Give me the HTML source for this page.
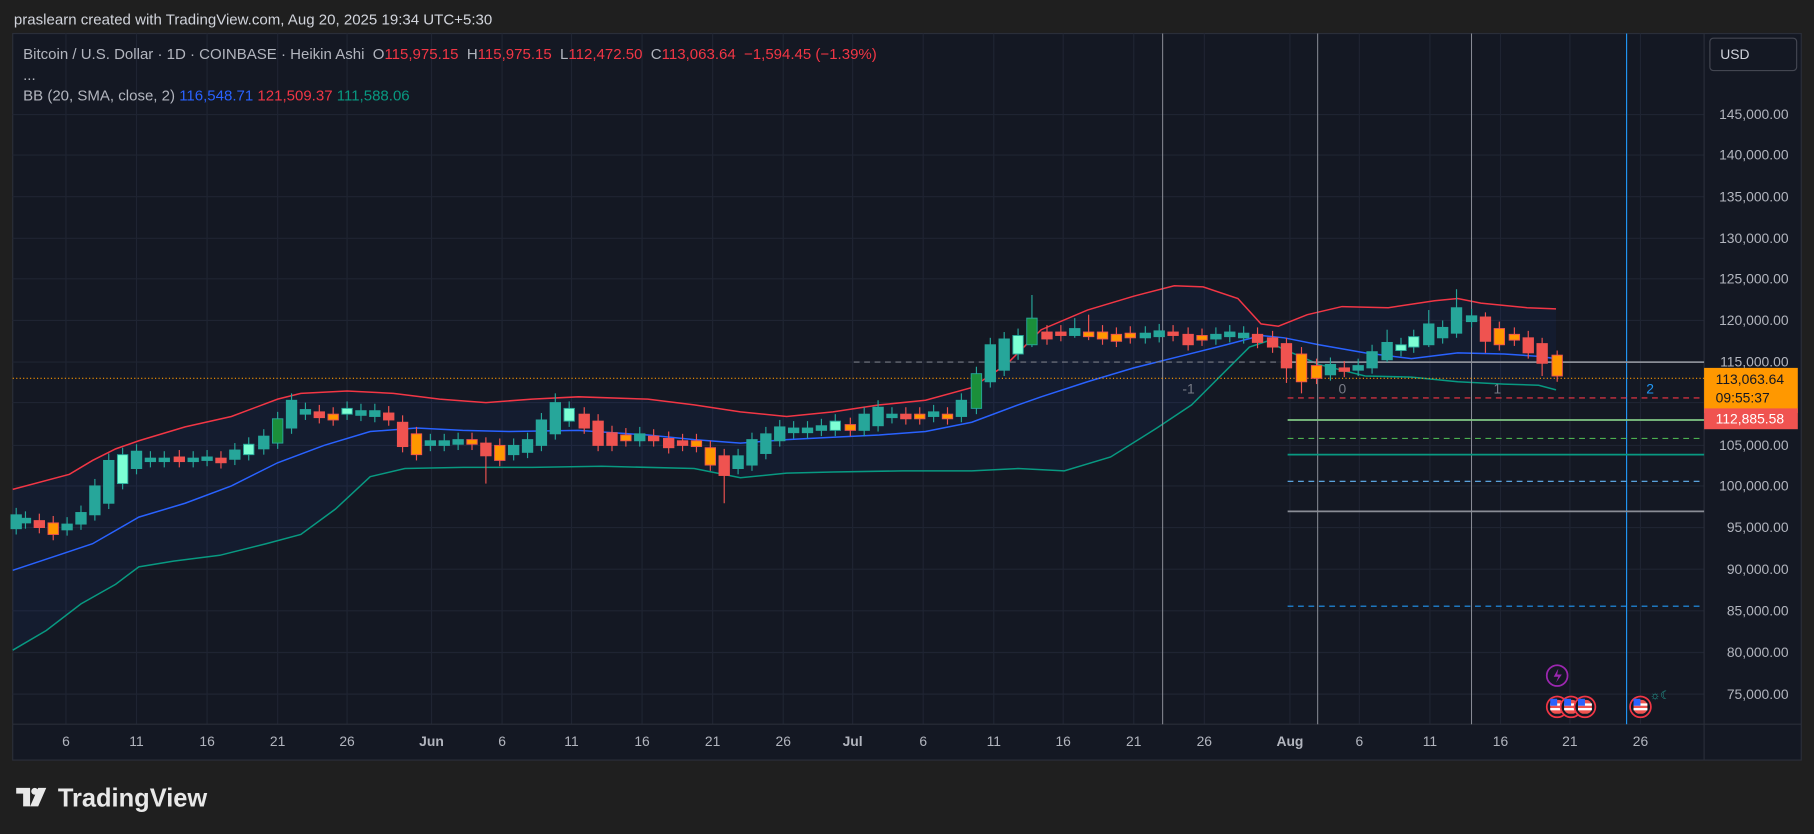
<!DOCTYPE html>
<html><head><meta charset="utf-8"><style>
html,body{margin:0;padding:0;background:#1f1f1f;width:1814px;height:834px;overflow:hidden}
#w{position:absolute;left:0;top:0;width:1568px;height:721px;transform:scale(1.15689);transform-origin:0 0;font-family:"Liberation Sans",sans-serif}
.t{position:absolute;white-space:nowrap}
</style></head><body><div id="w">
<div class="t" style="left:12px;top:9px;font-size:13px;color:#d1d4dc">praslearn created with TradingView.com, Aug 20, 2025 19:34 UTC+5:30</div>
<svg id="s" width="1568" height="721" style="position:absolute;left:0;top:0" font-family="Liberation Sans, sans-serif">
<rect x="11" y="29" width="1546" height="628" fill="#141823" stroke="#2a2e39"/>
<g id="grid" stroke="#1f2432" stroke-width="1"></g>
<line x1="1473" y1="29" x2="1473" y2="657" stroke="#2a2e39"/>
<line x1="11" y1="626" x2="1557" y2="626" stroke="#2a2e39"/>
<polygon id="band" fill="#2962ff" fill-opacity="0.06"/>
<polyline id="up" fill="none" stroke="#f23645" stroke-width="1.3"/>
<polyline id="mid" fill="none" stroke="#2962ff" stroke-width="1.3"/>
<polyline id="lo" fill="none" stroke="#089981" stroke-width="1.3"/>
<line x1="1005" y1="29" x2="1005" y2="626" stroke="#9598a1" stroke-width="0.8"/>
<line x1="1139" y1="29" x2="1139" y2="626" stroke="#9598a1" stroke-width="0.8"/>
<line x1="1272" y1="29" x2="1272" y2="626" stroke="#9598a1" stroke-width="0.8"/>
<line x1="1406" y1="29" x2="1406" y2="626" stroke="#2196f3" stroke-width="1"/>
<line x1="738" y1="313" x2="1113" y2="313" stroke="#787b86" stroke-dasharray="5,4"/>
<line x1="1113" y1="313" x2="1473" y2="313" stroke="#8a8d96" stroke-width="1.5"/>
<line x1="1113" y1="344" x2="1473" y2="344" stroke="#f23645" stroke-dasharray="5,4"/>
<line x1="1113" y1="363" x2="1473" y2="363" stroke="#81c784" stroke-width="1.5"/>
<line x1="1113" y1="379" x2="1473" y2="379" stroke="#4caf50" stroke-dasharray="5,4"/>
<line x1="1113" y1="393" x2="1473" y2="393" stroke="#089981" stroke-width="1.5"/>
<line x1="1113" y1="416" x2="1473" y2="416" stroke="#64b5f6" stroke-dasharray="5,4"/>
<line x1="1113" y1="442" x2="1473" y2="442" stroke="#8a8d96" stroke-width="1.5"/>
<line x1="1113" y1="524" x2="1473" y2="524" stroke="#2196f3" stroke-dasharray="5,4"/>
<line x1="11" y1="327" x2="1473" y2="327" stroke="#ff9800" stroke-dasharray="1,2"/>
<g id="c"></g>
<g font-size="12" fill="#787b86"><text x="1022" y="340">-1</text><text x="1157" y="340">0</text><text x="1291" y="340">1</text><text x="1423" y="340" fill="#2196f3">2</text></g>
<g id="pl" font-size="12" fill="#b2b5be"></g>
<g id="tl" font-size="12" fill="#b2b5be" text-anchor="middle"></g>
<rect x="1473" y="318" width="81" height="39" fill="#ff9800"/>
<text x="1483" y="332" font-size="12" fill="#131722">113,063.64</text>
<text x="1483" y="348" font-size="12" fill="#131722">09:55:37</text>
<rect x="1473" y="353" width="81" height="18" fill="#f05350"/>
<text x="1483" y="366" font-size="12" fill="#fff">112,885.58</text>
<rect x="1478" y="33" width="75" height="28" rx="3" fill="#141823" stroke="#434651"/>
<text x="1487" y="51" font-size="12" fill="#d1d4dc">USD</text>
<circle cx="1346" cy="584" r="9" fill="#141823" stroke="#9c27b0" stroke-width="1.5"/>
<path d="M1347 578 L1343 585 L1347 585 L1345 590 L1350 583 L1346 583 Z" fill="#9c27b0"/>
<g id="fl"></g>
<text x="1426" y="604" font-size="10" fill="#26a69a">☼☾</text>
<g font-size="13">
<text x="20" y="51" fill="#b2b5be" xml:space="preserve">Bitcoin / U.S. Dollar · 1D · COINBASE · Heikin Ashi  O<tspan fill="#f23645">115,975.15</tspan>  H<tspan fill="#f23645">115,975.15</tspan>  L<tspan fill="#f23645">112,472.50</tspan>  C<tspan fill="#f23645">113,063.64  −1,594.45 (−1.39%)</tspan></text>
<text x="20" y="69" fill="#b2b5be">...</text>
<text x="20" y="87" fill="#b2b5be">BB (20, SMA, close, 2) <tspan fill="#2962ff">116,548.71</tspan> <tspan fill="#f23645">121,509.37</tspan> <tspan fill="#089981">111,588.06</tspan></text>
</g>
<g fill="#e8e8e8"><path d="M14 681 H26 V697 H20 V686 H14 Z"/><circle cx="30" cy="684" r="3"/><path d="M33 681 H40 L33 697 H26 Z"/></g>
<text x="50" y="697" font-size="22" font-weight="bold" fill="#e8e8e8">TradingView</text>
</svg>
</div>
<script>
var NS="http://www.w3.org/2000/svg",s=document.getElementById('s');
function el(t,a,p){var e=document.createElementNS(NS,t);for(var k in a)e.setAttribute(k,a[k]);(p||s).appendChild(e);return e}
var g=document.getElementById('grid'),pl=document.getElementById('pl'),tl=document.getElementById('tl');
var prices=[["145,000.00",99],["140,000.00",134],["135,000.00",170],["130,000.00",206],["125,000.00",241],["120,000.00",277],["115,000.00",313],["110,000.00",348],["105,000.00",385],["100,000.00",420],["95,000.00",456],["90,000.00",492],["85,000.00",528],["80,000.00",564],["75,000.00",600]];
prices.forEach(function(p){el('line',{x1:11,x2:1473,y1:p[1],y2:p[1]},g);if(p[1]!=348){var t=el('text',{x:1546,y:p[1]+4,'text-anchor':'end'},pl);t.textContent=p[0];}});
var times=[["6",57],["11",118],["16",179],["21",240],["26",300],["Jun",373],["6",434],["11",494],["16",555],["21",616],["26",677],["Jul",737],["6",798],["11",859],["16",919],["21",980],["26",1041],["Aug",1115],["6",1175],["11",1236],["16",1297],["21",1357],["26",1418]];
times.forEach(function(t){el('line',{x1:t[1],x2:t[1],y1:29,y2:626},g);var e=el('text',{x:t[1],y:645},tl);e.textContent=t[0];if(isNaN(+t[0]))e.setAttribute('font-weight','bold');});
function P(s){return s.trim().split(/\s+/).map(function(q){return q.split(',')}).map(function(a){return [+a[0],+a[1]]})}
var U=P("11,423 60,410 80,398 100,388 120,381 160,369 200,360 240,345 260,340 300,338 340,340 380,345 420,348 460,345 500,343 560,345 600,350 640,356 680,360 720,356 760,350 800,346 840,335 870,315 900,285 940,268 980,256 1015,247 1040,248 1070,258 1090,280 1105,282 1130,272 1160,265 1200,266 1240,260 1260,258 1280,262 1320,266 1345,267");
var M=P("11,493 50,480 80,470 120,447 160,435 200,420 240,400 280,385 320,373 360,370 400,372 440,373 500,372 560,376 600,380 640,383 680,380 720,378 760,376 800,373 840,365 880,350 900,343 940,330 980,318 1020,308 1060,298 1090,290 1110,292 1140,298 1180,305 1220,310 1260,305 1300,306 1330,308 1345,310");
var L=P("11,562 40,545 70,522 100,505 120,490 150,485 190,480 230,470 260,462 290,440 320,412 350,405 400,404 460,404 520,403 600,405 640,413 680,409 720,408 780,407 840,407 880,405 920,407 960,395 1000,370 1030,350 1060,320 1080,300 1095,295 1110,302 1140,315 1180,325 1220,326 1260,330 1300,332 1330,333 1345,337");
function j(a){return a.map(function(p){return p.join(',')}).join(' ')}
document.getElementById('up').setAttribute('points',j(U));document.getElementById('mid').setAttribute('points',j(M));document.getElementById('lo').setAttribute('points',j(L));
document.getElementById('band').setAttribute('points',j(U)+' '+j(L.slice().reverse()));
var C="14,445,457,t 22,448,452,t 34,450,456,r 46,452,462,o 58,453,458,t 70,443,453,t 82,420,445,t 94,398,435,t 106,393,418,l 118,390,405,t 130,396,399,t 142,396,399,t 155,395,399,r 167,396,399,t 179,395,398,t 191,396,400,r 203,389,397,t 215,384,393,l 228,377,388,t 240,362,383,g 252,346,370,t 264,354,358,t 276,356,361,r 288,358,363,o 300,353,358,l 312,355,359,t 324,355,360,t 336,357,363,r 348,365,386,r 360,375,393,o 372,381,385,t 384,381,385,t 396,380,384,t 408,380,384,o 420,383,394,r 432,385,398,o 444,385,393,t 456,380,391,t 468,363,385,t 480,348,375,t 492,353,364,l 505,358,370,r 517,364,385,r 529,374,385,r 541,376,381,o 553,375,381,t 565,377,381,r 578,379,387,r 590,381,385,r 602,381,386,o 614,387,402,o 626,394,411,r 638,394,405,t 650,380,402,t 662,375,392,t 674,369,381,t 686,370,374,t 698,370,374,t 710,368,372,t 722,364,372,l 735,367,372,o 747,358,372,t 759,352,368,t 771,358,361,t 783,358,362,r 795,358,362,o 807,356,360,t 819,358,362,o 831,346,360,t 844,323,353,g 856,298,330,t 868,293,320,t 880,290,306,l 892,275,298,g 905,287,293,r 917,287,290,r 929,284,290,t 941,287,291,o 953,287,293,o 965,289,295,o 977,288,292,o 990,288,292,t 1002,286,291,t 1014,287,290,r 1027,289,298,r 1039,290,294,o 1051,289,293,t 1063,287,291,t 1075,288,292,t 1087,289,296,r 1100,292,300,r 1112,297,318,r 1125,306,330,o 1138,316,327,o 1150,315,324,t 1162,318,321,r 1174,316,320,t 1186,304,318,t 1199,296,311,t 1211,298,303,l 1222,291,300,l 1235,280,298,t 1247,283,292,t 1259,266,288,t 1272,273,278,t 1284,274,295,r 1296,284,298,o 1309,289,294,o 1321,292,305,r 1333,297,314,r 1346,307,325,o";
var col={t:["#26a69a","#26a69a"],r:["#ef5350","#ef5350"],o:["#ff9800","#ef5350"],l:["#7dffd4","#26a69a"],g:["#1b8f3a","#26a69a"]};
var wk={892:[255,300],1259:[250,292],420:[378,418],626:[388,435],1112:[292,331],1125:[300,340],1284:[270,305],1333:[292,325],1346:[303,330],480:[340,380],1199:[285,313],1235:[268,300],941:[272,294],929:[275,292]};
var cg=document.getElementById('c');
C.split(' ').forEach(function(q){var a=q.split(','),x=+a[0],t=+a[1],b=+a[2],c=col[a[3]];var w=wk[x]||[t-6,b+5];
el('line',{x1:x,x2:x,y1:w[0],y2:w[1],stroke:c[1],'stroke-width':1},cg);
el('rect',{x:x-4.5,y:t,width:9,height:Math.max(b-t,2),fill:c[0],stroke:c[1],'stroke-width':0.8},cg);});
var fl=document.getElementById('fl');
[1346,1358,1370,1418].forEach(function(x){el('circle',{cx:x,cy:611,r:9,fill:'#141823',stroke:'#f23645','stroke-width':1.5},fl);
el('rect',{x:x-6,y:605,width:12,height:12,rx:5,fill:'#ef5350'},fl);el('rect',{x:x-6,y:608,width:12,height:2,fill:'#fff'},fl);el('rect',{x:x-6,y:612,width:12,height:2,fill:'#fff'},fl);el('rect',{x:x-6,y:604,width:6,height:6,fill:'#2962ff'},fl);});
</script>
</body></html>
